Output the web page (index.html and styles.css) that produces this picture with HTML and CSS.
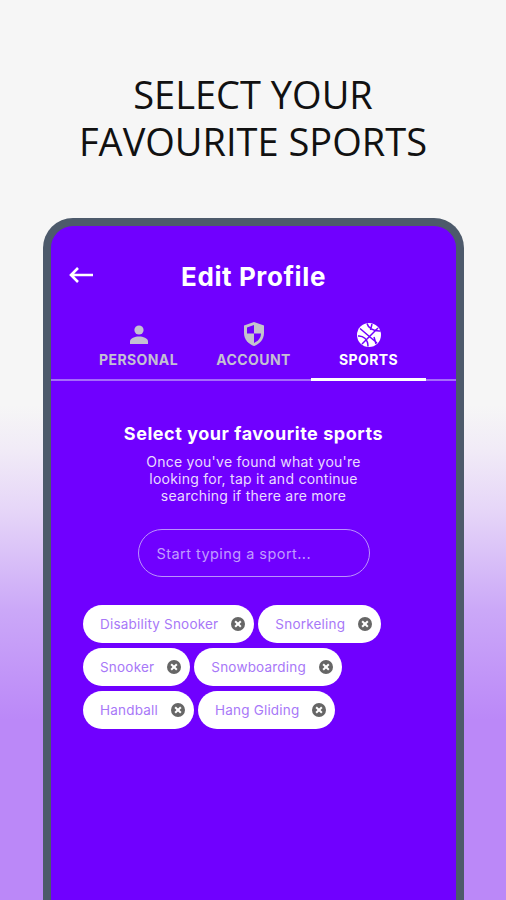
FILE: index.html
```html
<!DOCTYPE html>
<html lang="en">
<head>
    <meta charset="UTF-8">
    <title>Edit Profile</title>
    <link rel="stylesheet" href="styles.css">
</head>
<body>
<h1 class="headline">SELECT YOUR<br>FAVOURITE SPORTS</h1>
<div class="phone">
    <div class="topbar">
        <svg class="back" width="26" height="18" viewBox="0 0 26 18"><path d="M25 9H3M10 2 3 9l7 7" fill="none" stroke="#fff" stroke-width="2.6"/></svg>
        <div class="title">Edit Profile</div>
    </div>
    <div class="tabs">
        <div class="tab">
            <svg width="24" height="24" viewBox="0 0 24 24"><circle cx="12" cy="7" r="4.6" fill="#c4c0d2"/><path d="M3 21v-2.500C3 15 8 13.500 12 13.500s9 1.500 9 5V21z" fill="#c4c0d2"/></svg>
            <span>PERSONAL</span>
        </div>
        <div class="tab">
            <svg width="24" height="26" viewBox="0 0 24 26"><path d="M12 1 2 4.500V12c0 6.500 4.500 11 10 13 5.500-2 10-6.500 10-13V4.500z" fill="#c4c4cc"/><path d="M12 4 5 6.500V12.500h7zM12 12.500V22c3.500-1.500 7-4.500 7-9.500z" fill="#7000ff"/></svg>
            <span>ACCOUNT</span>
        </div>
        <div class="tab active">
            <svg width="24" height="24" viewBox="0 0 24 24"><circle cx="12" cy="12" r="12" fill="#fff"/><path d="M3 5.500 20 20M21 5 5 21M10 .5c1 4 6 8 13.500 7.500M1 13c5-.5 10 3 10 10.500M15 1l-1.500 6M17 14l2 7" fill="none" stroke="#7000ff" stroke-width="1.500"/></svg>
            <span>SPORTS</span>
        </div>
    </div>
    <div class="content">
        <h2 class="heading">Select your favourite sports</h2>
        <p class="hint">Once you've found what you're<br>looking for, tap it and continue<br>searching if there are more</p>
        <div class="search">Start typing a sport...</div>
        <div class="chips">
            <div class="chip">Disability Snooker<span class="close"></span></div>
            <div class="chip">Snorkeling<span class="close"></span></div>
            <div class="chip">Snooker<span class="close"></span></div>
            <div class="chip">Snowboarding<span class="close"></span></div>
            <div class="chip">Handball<span class="close"></span></div>
            <div class="chip">Hang Gliding<span class="close"></span></div>
        </div>
    </div>
</div>
</body>
</html>
```

FILE: styles.css
```css
html, body {
    margin: 0;
    height: 900px;
    overflow: hidden;
}

body {
    background: linear-gradient(180deg, #f6f6f6 0, #f6f6f6 405px, #f1ebf7 450px, #e6d6f8 510px, #cba8f8 610px, #bb88f8 720px, #bb88f8 900px);
    font-family: Inter, "Liberation Sans", sans-serif;
}

.headline {
    margin: 0;
    padding-top: 71px;
    height: 218px;
    box-sizing: border-box;
    text-align: center;
    font-family: "Open Sans", sans-serif;
    font-weight: 500;
    font-size: 38px;
    line-height: 47px;
    color: #111;
}

.phone {
    margin-left: 43px;
    width: 421px;
    height: 682px;
    box-sizing: border-box;
    border: 8px solid #4d5a6b;
    border-bottom: 0;
    border-radius: 30px 30px 0 0;
    background: #7000ff;
    color: #fff;
}

.topbar {
    position: relative;
    padding-top: 36px;
    height: 70px;
    box-sizing: border-box;
}

.back {
    position: absolute;
    left: 17px;
    top: 40px;
}

.title {
    text-align: center;
    font-size: 26px;
    line-height: 30px;
    font-weight: 700;
    letter-spacing: 0.6px;
}

.tabs {
    display: flex;
    height: 85px;
    box-sizing: border-box;
    border-bottom: 2px solid #a56cfa;
    padding: 20px 30px 0;
}

.tab {
    flex: 1;
    display: flex;
    flex-direction: column;
    align-items: center;
    justify-content: flex-end;
    gap: 4px;
    padding-bottom: 13px;
    margin-bottom: -2px;
    font-size: 14px;
    font-weight: 700;
    letter-spacing: 0.4px;
    color: #c4c0d2;
    white-space: nowrap;
}

.tab.active {
    color: #fff;
    border-bottom: 3px solid #fff;
    padding-bottom: 10px;
}

.content {
    display: flex;
    flex-direction: column;
    align-items: center;
}

.heading {
    margin: 41px 0 0;
    font-size: 18px;
    line-height: 24px;
    font-weight: 700;
    letter-spacing: 0.55px;
}

.hint {
    margin: 7px 0 0;
    text-align: center;
    font-size: 14px;
    line-height: 17px;
    letter-spacing: 0.25px;
    color: #eadcff;
}

.search {
    margin-top: 25px;
    width: 232px;
    height: 48px;
    box-sizing: border-box;
    padding: 0 18px;
    border: 1.500px solid #bb92fc;
    border-radius: 24px;
    font-size: 14.500px;
    line-height: 48px;
    letter-spacing: 0.45px;
    color: #c09cff;
}

.chips {
    margin: 28px 0 0 32px;
    width: 340px;
    display: flex;
    flex-wrap: wrap;
    gap: 5px 4px;
    align-self: flex-start;
}

.chip {
    display: flex;
    align-items: center;
    height: 38px;
    padding: 0 9px 0 17px;
    gap: 13px;
    border-radius: 19px;
    background: #fff;
    color: #a878f8;
    font-size: 13.500px;
    letter-spacing: 0.2px;
}

.close {
    position: relative;
    width: 14px;
    height: 14px;
    border-radius: 50%;
    background: #666;
}

.close::before, .close::after {
    content: "";
    position: absolute;
    left: 3px;
    top: 6px;
    width: 8px;
    height: 2px;
    background: #fff;
    transform: rotate(45deg);
}

.close::after {
    transform: rotate(-45deg);
}
```
